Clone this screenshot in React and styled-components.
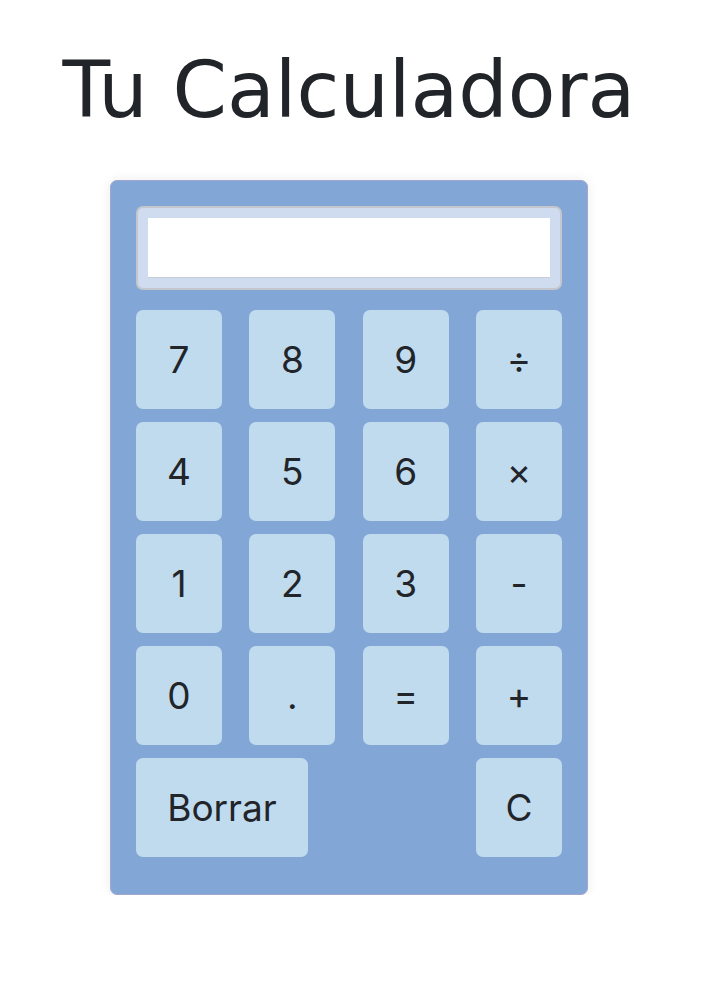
import React, { useState } from "react";
import styled, { createGlobalStyle } from "styled-components";

const GlobalStyle = createGlobalStyle`
  body {
    margin: 0;
    background: #fff;
  }
`;

const Page = styled.main`
  width: 698px;
  display: flex;
  flex-direction: column;
  align-items: center;
  padding-top: 36px;
`;

const Title = styled.h1`
  margin: 0;
  font-family: "DejaVu Sans", sans-serif;
  font-weight: 400;
  font-size: 78px;
  line-height: 108px;
  color: #212529;
`;

const Calculator = styled.div`
  margin-top: 36px;
  width: 478px;
  box-sizing: border-box;
  padding: 25px 25px 37px;
  background: #82a6d6;
  border: 1px solid #a3a6cf;
  border-radius: 7px;
  box-shadow: 0 0 12px rgba(0, 0, 0, 0.08);
  display: flex;
  flex-direction: column;
  gap: 13px;
`;

const Screen = styled.div`
  height: 84px;
  box-sizing: border-box;
  border: 2px solid #c3c6cc;
  border-radius: 7px;
  background: #cfdbee;
  padding: 10px;
  margin-bottom: 7px;
`;

const ScreenInput = styled.input`
  display: block;
  width: 100%;
  height: 100%;
  box-sizing: border-box;
  border: none;
  border-bottom: 1px solid #c7ccd6;
  background: #fff;
  outline: none;
  font-family: Inter, sans-serif;
  font-size: 34px;
  text-align: right;
  padding: 0 8px;
  color: #212529;
`;

const Row = styled.div`
  display: flex;
  justify-content: space-between;
`;

const Key = styled.button`
  width: ${({ wide }) => (wide ? "172px" : "86px")};
  height: 99px;
  border: none;
  border-radius: 7px;
  background: #c0daee;
  color: #212529;
  font-family: Inter, "Liberation Sans", sans-serif;
  font-size: 37px;
  padding: 0;
  cursor: pointer;
`;

const rows = [
  ["7", "8", "9", "÷"],
  ["4", "5", "6", "×"],
  ["1", "2", "3", "-"],
  ["0", ".", "=", "+"],
];

function App() {
  const [value, setValue] = useState("");

  const press = (k) => {
    if (k === "=") {
      try {
        const expr = value.replace(/÷/g, "/").replace(/×/g, "*");
        // eslint-disable-next-line no-new-func
        setValue(String(Function(`return (${expr})`)()));
      } catch (e) {
        setValue("Error");
      }
    } else {
      setValue(value + k);
    }
  };

  return (
    <>
      <GlobalStyle />
      <Page>
        <Title>Tu Calculadora</Title>
        <Calculator>
          <Screen>
            <ScreenInput value={value} readOnly />
          </Screen>
          {rows.map((row, i) => (
            <Row key={i}>
              {row.map((k) => (
                <Key key={k} onClick={() => press(k)}>
                  {k}
                </Key>
              ))}
            </Row>
          ))}
          <Row>
            <Key wide onClick={() => setValue(value.slice(0, -1))}>
              Borrar
            </Key>
            <Key onClick={() => setValue("")}>C</Key>
          </Row>
        </Calculator>
      </Page>
    </>
  );
}

export default App;
